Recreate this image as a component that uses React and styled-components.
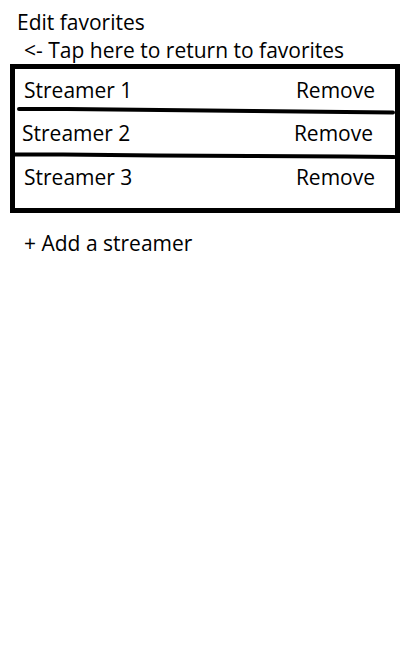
import React from "react";
import styled, { createGlobalStyle } from "styled-components";

const GlobalStyle = createGlobalStyle`
    body {
        margin: 0;
        background: #ffffff;
        font-family: "Open Sans", "DejaVu Sans", sans-serif;
        color: #000000;
    }
`;

const Page = styled.div`
    width: 405px;
    height: 655px;
    padding-top: 10px;
    box-sizing: border-box;
    font-size: 21px;
    line-height: 24px;
`;

const Title = styled.div`
    margin-left: 17px;
`;

const BackLink = styled.div`
    margin: 4px 0 0 24px;
    cursor: pointer;
`;

const Box = styled.div`
    margin: 2px 0 0 10px;
    width: 390px;
    box-sizing: border-box;
    border: 5px solid #000000;
    padding: 9px 0 19px;
`;

const Row = styled.div`
    display: flex;
    align-items: center;
    height: 24px;
    padding-left: ${(p) => p.indent}px;
    padding-right: ${(p) => p.right}px;
`;

const Name = styled.span`
    flex: 1;
`;

const Remove = styled.span`
    cursor: pointer;
`;

const Divider = styled.svg`
    display: block;
    width: 380px;
    height: ${(p) => p.h}px;
`;

const AddLink = styled.div`
    margin: 18px 0 0 24px;
    cursor: pointer;
`;

const streamers = [
    { name: "Streamer 1", indent: 9, right: 20 },
    { name: "Streamer 2", indent: 7, right: 22 },
    { name: "Streamer 3", indent: 9, right: 20 },
];

// hand-drawn separators between rows
const dividers = [
    { h: 19, d: "M4 7 L52 7 L145 8 L238 9 L330 10 L378 10.5" },
    { h: 20, d: "M0 9.5 L48 9.5 L142 10.5 L235 11 L330 11.5 L379 12" },
];

export default function App() {
    return (
        <>
            <GlobalStyle />
            <Page>
                <Title>Edit favorites</Title>
                <BackLink>&lt;- Tap here to return to favorites</BackLink>
                <Box>
                    {streamers.map((s, i) => (
                        <React.Fragment key={s.name}>
                            <Row indent={s.indent} right={s.right}>
                                <Name>{s.name}</Name>
                                <Remove>Remove</Remove>
                            </Row>
                            {dividers[i] && (
                                <Divider h={dividers[i].h} viewBox={`0 0 380 ${dividers[i].h}`}>
                                    <path d={dividers[i].d} stroke="#000" strokeWidth="4" fill="none" strokeLinecap="round" />
                                </Divider>
                            )}
                        </React.Fragment>
                    ))}
                </Box>
                <AddLink>+ Add a streamer</AddLink>
            </Page>
        </>
    );
}
